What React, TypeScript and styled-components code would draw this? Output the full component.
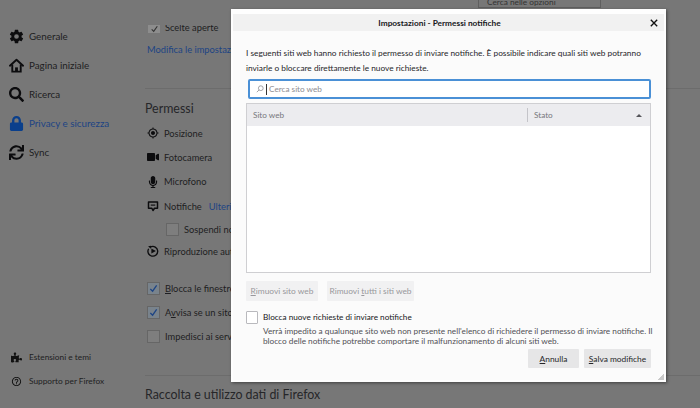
import React from "react";
import styled, { createGlobalStyle } from "styled-components";
import { FaVideo, FaMicrophone, FaPuzzlePiece, FaLock, FaSearch, FaSync } from "react-icons/fa";
import { IoSettingsSharp } from "react-icons/io5";
import { MdGpsFixed, MdOutlineHelpOutline } from "react-icons/md";

const Global = createGlobalStyle`
  html, body { margin: 0; padding: 0; width: 700px; height: 408px; overflow: hidden; background: #777; }
  body { font-family: "Lato", "Open Sans", sans-serif; color: #1c1c20; }
  * { box-sizing: border-box; }
`;

const Page = styled.div`
  position: relative;
  display: flex;
  width: 700px;
  height: 408px;
  overflow: hidden;
  background: #777;
`;

const Sidebar = styled.nav`
  width: 145px;
  flex: none;
  display: flex;
  flex-direction: column;
  padding: 22px 0 17px 9px;
`;

const NavList = styled.div`
  display: flex;
  flex-direction: column;
  gap: 1px;
`;

const NavItem = styled.div<{ $active?: boolean }>`
  display: flex;
  align-items: center;
  height: 28px;
  gap: 5px;
  font-size: 9.8px;
  color: ${(p) => (p.$active ? "#1d4484" : "#1e1e22")};
  svg { width: 15px; height: 15px; flex: none; color: ${(p) => (p.$active ? "#0a3f8c" : "#0c0c0e")}; }
`;

const Footer = styled.div`
  margin-top: auto;
  display: flex;
  flex-direction: column;
  gap: 4px;
`;

const FootItem = styled.div`
  display: flex;
  align-items: center;
  height: 20px;
  gap: 7px;
  padding-left: 2px;
  font-size: 8.3px;
  color: #1e1e22;
  svg { width: 11px; height: 11px; flex: none; color: #111; }
`;

const Main = styled.main`
  flex: 1;
  min-width: 0;
  display: flex;
  flex-direction: column;
  white-space: nowrap;
`;

const TopBar = styled.div`
  height: 25px;
  flex: none;
  display: flex;
  justify-content: flex-end;
  padding-right: 99px;
`;

const SearchBehind = styled.div`
  width: 123px;
  height: 8px;
  border: 1px solid #5f5f5f;
  border-top: 0;
  font-size: 8.3px;
  line-height: 5px;
  padding-left: 8px;
  color: #333;
  overflow: hidden;
`;

const ClippedRow = styled.div`
  height: 8px;
  flex: none;
  overflow: hidden;
  display: flex;
  align-items: flex-end;
  gap: 5px;
  padding-left: 3px;
  font-size: 9.3px;
  line-height: 11px;
  color: #1e1e22;
`;

const ClippedBox = styled.span`
  width: 12px;
  height: 8px;
  background: #8d8d8d;
  flex: none;
  svg { display: block; width: 9px; height: 8px; margin: 0 auto; color: #333; }
`;

const LinkLine = styled.div`
  margin: 10px 0 0 2px;
  height: 14px;
  font-size: 9.3px;
  line-height: 14px;
  color: #1d4484;
`;

const Rule = styled.div`
  height: 1px;
  background: #6c6c6c;
`;

const Heading = styled.h2`
  margin: 0;
  font-weight: 400;
  font-size: 12.4px;
  line-height: 20px;
  color: #262629;
`;

const Permissions = styled.div`
  margin-top: 31px;
  border-top: 1px solid #6c6c6c;
  padding-top: 10px;
`;

const PermRows = styled.div`
  margin-top: 2px;
  padding-left: 2px;
  display: flex;
  flex-direction: column;
`;

const Perm = styled.div<{ $indent?: number; $h?: number }>`
  display: flex;
  align-items: center;
  height: ${(p) => p.$h ?? 24.3}px;
  gap: 5px;
  padding-left: ${(p) => p.$indent ?? 0}px;
  font-size: 9.3px;
  color: #1e1e22;
  svg { width: 12px; height: 12px; flex: none; color: #0c0c0e; }
`;

const BlueText = styled.span`
  color: #1d4484;
  margin-left: 2px;
`;

const BgCheck = styled.span<{ $on?: boolean }>`
  width: 13px;
  height: 13px;
  flex: none;
  border: 1px solid #666;
  background: ${(p) => (p.$on ? "#79838c" : "#7e7e7e")};
  display: flex;
  align-items: center;
  justify-content: center;
  svg { width: 9px; height: 9px; color: #1d4484; }
`;

const Gap = styled.div`
  height: 14px;
`;

const LowerRule = styled(Rule)`
  margin-top: 26px;
`;

const LowerHeading = styled(Heading)`
  margin-top: 9px;
`;

const Dialog = styled.section`
  position: absolute;
  left: 231px;
  top: 9px;
  width: 435px;
  height: 373px;
  background: #fbfbfb;
  border: 2px solid #fefefe;
  border-top-width: 5px;
  box-shadow: 1px 1px 3px rgba(0, 0, 0, 0.45);
  display: flex;
  flex-direction: column;
  color: #222226;
  font-size: 8.3px;
`;

const TitleBar = styled.header`
  position: relative;
  height: 17px;
  flex: none;
  background: #f1f1f1;
  display: flex;
  align-items: center;
  justify-content: center;
  padding-right: 18px;
  font-size: 8.3px;
  font-weight: 700;
  color: #17171a;
`;

const Close = styled.button`
  position: absolute;
  right: 3px;
  top: 2px;
  width: 14px;
  height: 14px;
  padding: 0;
  border: 0;
  background: none;
  display: flex;
  align-items: center;
  justify-content: center;
  svg { width: 8px; height: 8px; }
`;

const Content = styled.div`
  flex: 1;
  min-height: 0;
  display: flex;
  flex-direction: column;
  padding: 15px 13px 12px 13px;
`;

const Intro = styled.p`
  margin: 0;
  font-size: 8.3px;
  line-height: 15px;
  color: #26262a;
  white-space: nowrap;
`;

const SearchField = styled.div`
  margin: 3px 0 0 2px;
  height: 20px;
  border: 2px solid #4a90d6;
  border-radius: 2px;
  background: #fff;
  display: flex;
  align-items: center;
  padding-left: 6px;
  gap: 2px;
  font-size: 8.2px;
  color: #8d8d92;
  svg { width: 8px; height: 8px; color: #8d8d92; flex: none; }
`;

const Caret = styled.span`
  width: 1px;
  height: 11px;
  background: #333;
`;

const Table = styled.div`
  margin-top: 4px;
  height: 170px;
  flex: none;
  border: 1px solid #cfcfd2;
  background: #fff;
  display: flex;
  flex-direction: column;
`;

const TableHead = styled.div`
  height: 22px;
  flex: none;
  background: #ececef;
  display: grid;
  grid-template-columns: 280px 1fr;
  align-items: center;
  font-size: 8.2px;
  color: #77777c;
`;

const HeadCell = styled.div`
  padding-left: 6px;
  height: 14px;
  line-height: 14px;
`;

const StateCell = styled(HeadCell)`
  border-left: 1px solid #c4c4c9;
  display: flex;
  align-items: center;
  justify-content: space-between;
  padding-right: 8px;
`;

const SortArrow = styled.span`
  width: 0;
  height: 0;
  border-left: 3px solid transparent;
  border-right: 3px solid transparent;
  border-bottom: 3px solid #55555a;
`;

const RemoveRow = styled.div`
  margin-top: 8px;
  display: flex;
  gap: 9px;
`;

const Button = styled.button<{ $disabled?: boolean; $w: number }>`
  width: ${(p) => p.$w}px;
  height: ${(p) => (p.$disabled ? 20 : 19)}px;
  padding: 0;
  border: 0;
  border-radius: 1px;
  font-family: inherit;
  font-size: 8.4px;
  white-space: nowrap;
  background: ${(p) => (p.$disabled ? "#f1f1f2" : "#e6e6e7")};
  color: ${(p) => (p.$disabled ? "#98989c" : "#26262a")};
`;

const BlockRow = styled.div`
  margin-top: 10px;
  display: flex;
  gap: 5px;
`;

const BigCheck = styled.span`
  width: 12px;
  height: 13px;
  flex: none;
  border: 1px solid #b9b9bd;
  border-radius: 1px;
  background: #fff;
`;

const BlockText = styled.div`
  display: flex;
  flex-direction: column;
`;

const BlockLabel = styled.div`
  font-size: 8.2px;
  line-height: 13px;
  color: #17171a;
`;

const BlockDesc = styled.div`
  margin-top: 2px;
  font-size: 8.25px;
  line-height: 10px;
  color: #505055;
  white-space: nowrap;
`;

const Actions = styled.div`
  margin-top: auto;
  display: flex;
  justify-content: flex-end;
  gap: 5px;
`;

const Grip = styled.span`
  position: absolute;
  right: 0;
  bottom: 0;
  width: 7px;
  height: 7px;
  background: linear-gradient(135deg, transparent 50%, #c9c9c9 50%);
`;

const Key = styled.span`
  text-decoration: underline;
`;

const Check = () => (
  <svg viewBox="0 0 10 10" fill="none" stroke="currentColor" strokeWidth="1.4">
    <path d="M1.5 5.5 L4 8 L8.5 1.5" />
  </svg>
);

const House = () => (
  <svg viewBox="0 0 16 16" fill="none" stroke="currentColor" strokeWidth="2">
    <path d="M1 8.2 L8 1.8 L15 8.2" strokeLinecap="round" strokeLinejoin="round" />
    <path d="M3.5 7 V14.5 H12.5 V7" />
    <path d="M6.5 14.5 V10 H9.5 V14.5" fill="currentColor" stroke="none" />
  </svg>
);

const Speech = () => (
  <svg viewBox="0 0 16 16" fill="none" stroke="currentColor" strokeWidth="2">
    <path d="M2 2.5 H14 V11 H10 L8 14 L6.5 11 H2 Z" strokeLinejoin="round" />
    <path d="M5 6.8 H11" strokeWidth="1.5" />
  </svg>
);

const Autoplay = () => (
  <svg viewBox="0 0 16 16" fill="none" stroke="currentColor" strokeWidth="1.8">
    <path d="M5 2.5 A6.5 6.5 0 1 1 2.2 5" />
    <path d="M1.5 1.5 L5.5 1 L5 5 Z" fill="currentColor" stroke="none" />
    <path d="M5.8 4.6 L11.8 8 L5.8 11.4 Z" fill="currentColor" stroke="none" />
  </svg>
);

const Glass = () => (
  <svg viewBox="0 0 10 10" fill="none" stroke="currentColor" strokeWidth="1">
    <circle cx="6" cy="4" r="3" />
    <path d="M3.8 6.2 L1 9" />
  </svg>
);

const CloseX = () => (
  <svg viewBox="0 0 10 10" fill="none" stroke="#111" strokeWidth="1.7">
    <path d="M1 1 L9 9 M9 1 L1 9" />
  </svg>
);

export default function App() {
  return (
    <Page>
      <Global />
      <Sidebar>
        <NavList>
          <NavItem><IoSettingsSharp />Generale</NavItem>
          <NavItem><House />Pagina iniziale</NavItem>
          <NavItem><FaSearch />Ricerca</NavItem>
          <NavItem $active><FaLock />Privacy e sicurezza</NavItem>
          <NavItem><FaSync />Sync</NavItem>
        </NavList>
        <Footer>
          <FootItem><FaPuzzlePiece />Estensioni e temi</FootItem>
          <FootItem><MdOutlineHelpOutline />Supporto per Firefox</FootItem>
        </Footer>
      </Sidebar>
      <Main>
        <TopBar><SearchBehind>Cerca nelle opzioni</SearchBehind></TopBar>
        <ClippedRow><ClippedBox><Check /></ClippedBox>Scelte aperte</ClippedRow>
        <LinkLine>Modifica le impostazioni</LinkLine>
        <Permissions>
          <Heading>Permessi</Heading>
          <PermRows>
            <Perm><MdGpsFixed />Posizione</Perm>
            <Perm><FaVideo />Fotocamera</Perm>
            <Perm><FaMicrophone />Microfono</Perm>
            <Perm><Speech />Notifiche <BlueText>Ulteriori informazioni</BlueText></Perm>
            <Perm $indent={19} $h={22}><BgCheck />Sospendi notifiche</Perm>
            <Perm $h={22}><Autoplay />Riproduzione automatica</Perm>
            <Gap />
            <Perm><BgCheck $on><Check /></BgCheck><span><Key>B</Key>locca le finestre</span></Perm>
            <Perm><BgCheck $on><Check /></BgCheck><span>A<Key>v</Key>visa se un sito</span></Perm>
            <Perm><BgCheck />Impedisci ai servizi</Perm>
          </PermRows>
        </Permissions>
        <LowerRule />
        <LowerHeading>Raccolta e utilizzo dati di Firefox</LowerHeading>
      </Main>
      <Dialog>
        <TitleBar>
          Impostazioni - Permessi notifiche
          <Close aria-label="Chiudi"><CloseX /></Close>
        </TitleBar>
        <Content>
          <Intro>
            I seguenti siti web hanno richiesto il permesso di inviare notifiche. È possibile indicare quali siti web potranno
            <br />
            inviarle o bloccare direttamente le nuove richieste.
          </Intro>
          <SearchField><Glass /><Caret />Cerca sito web</SearchField>
          <Table>
            <TableHead>
              <HeadCell>Sito web</HeadCell>
              <StateCell>Stato<SortArrow /></StateCell>
            </TableHead>
          </Table>
          <RemoveRow>
            <Button $disabled $w={72}><Key>R</Key>imuovi sito web</Button>
            <Button $disabled $w={87}>Rimuovi <Key>t</Key>utti i siti web</Button>
          </RemoveRow>
          <BlockRow>
            <BigCheck />
            <BlockText>
              <BlockLabel>Blocca nuove richieste di inviare notifiche</BlockLabel>
              <BlockDesc>
                Verrà impedito a qualunque sito web non presente nell'elenco di richiedere il permesso di inviare notifiche. Il
                <br />
                blocco delle notifiche potrebbe comportare il malfunzionamento di alcuni siti web.
              </BlockDesc>
            </BlockText>
          </BlockRow>
          <Actions>
            <Button $w={51}><Key>A</Key>nnulla</Button>
            <Button $w={67}><Key>S</Key>alva modifiche</Button>
          </Actions>
        </Content>
        <Grip />
      </Dialog>
    </Page>
  );
}
